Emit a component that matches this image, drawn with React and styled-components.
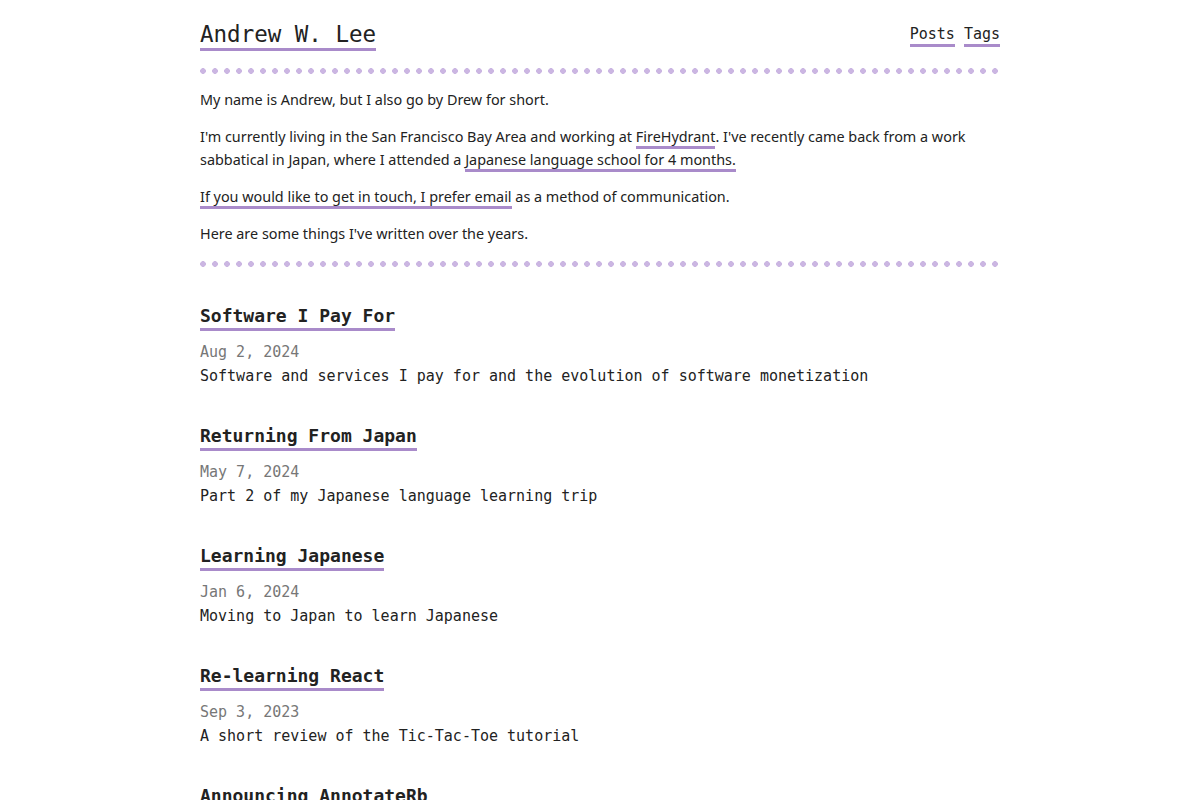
import styled, { createGlobalStyle } from "styled-components";

const GlobalStyle = createGlobalStyle`
    body {
        margin: 0;
        background: #ffffff;
        color: #222222;
        font-family: "Noto Sans", "Open Sans", sans-serif;
    }
`;

const accent = "#a98bca";
const dotColor = "#cbb6e2";
const mono = `"DejaVu Sans Mono", "Liberation Mono", monospace`;

const Page = styled.div`
    width: 800px;
    margin: 0 auto;
    padding-top: 20px;
`;

const Header = styled.header`
    display: flex;
    justify-content: space-between;
    align-items: center;
`;

const SiteTitle = styled.a`
    display: inline-block;
    font-family: ${mono};
    font-size: 22.5px;
    line-height: 28px;
    color: #222;
    text-decoration: none;
    border-bottom: 3px solid ${accent};
`;

const Nav = styled.nav`
    display: flex;
    gap: 9px;
`;

const NavLink = styled.a`
    display: inline-block;
    font-family: ${mono};
    font-size: 15px;
    line-height: 20px;
    color: #222;
    text-decoration: none;
    border-bottom: 3px solid ${accent};
`;

const Dots = styled.div`
    height: 6px;
    margin: ${(props) => props.margin};
    background-image: radial-gradient(circle, ${dotColor} 2.6px, transparent 3.1px);
    background-size: 12px 6px;
    background-position: -3px 0;
    background-repeat: repeat-x;
`;

const Intro = styled.section`
    display: flex;
    flex-direction: column;
    gap: 14px;
    font-size: 14.4px;
    line-height: 23px;
`;

const Para = styled.p`
    margin: 0;
`;

const InlineLink = styled.a`
    color: #222;
    text-decoration: none;
    border-bottom: 3px solid ${accent};
`;

const PostList = styled.section`
    display: flex;
    flex-direction: column;
    padding-top: 1px;
`;

const Post = styled.article`
    margin-top: 36px;
    font-family: ${mono};
`;

const PostTitle = styled.a`
    display: inline-block;
    font-size: 18px;
    font-weight: bold;
    line-height: 24px;
    color: #222;
    text-decoration: none;
    border-bottom: 3px solid ${accent};
`;

const PostDate = styled.div`
    margin-top: 9px;
    font-size: 15px;
    line-height: 24px;
    color: #777;
`;

const PostSummary = styled.div`
    font-size: 15px;
    line-height: 24px;
    color: #222;
`;

const posts = [
    { title: "Software I Pay For", date: "Aug 2, 2024", summary: "Software and services I pay for and the evolution of software monetization" },
    { title: "Returning From Japan", date: "May 7, 2024", summary: "Part 2 of my Japanese language learning trip" },
    { title: "Learning Japanese", date: "Jan 6, 2024", summary: "Moving to Japan to learn Japanese" },
    { title: "Re-learning React", date: "Sep 3, 2023", summary: "A short review of the Tic-Tac-Toe tutorial" },
    { title: "Announcing AnnotateRb", date: "Apr 10, 2023", summary: "A new gem for annotating Rails models" }
];

export default function App() {
    return (
        <>
            <GlobalStyle />
            <Page>
                <Header>
                    <SiteTitle href="#">Andrew W. Lee</SiteTitle>
                    <Nav>
                        <NavLink href="#">Posts</NavLink>
                        <NavLink href="#">Tags</NavLink>
                    </Nav>
                </Header>
                <Dots margin="17px 0 14px" />
                <Intro>
                    <Para>My name is Andrew, but I also go by Drew for short.</Para>
                    <Para>
                        I'm currently living in the San Francisco Bay Area and working at{" "}
                        <InlineLink href="#">FireHydrant</InlineLink>. I've recently came back from a work
                        sabbatical in Japan, where I attended a{" "}
                        <InlineLink href="#">Japanese language school for 4 months.</InlineLink>
                    </Para>
                    <Para>
                        <InlineLink href="#">If you would like to get in touch, I prefer email</InlineLink> as a
                        method of communication.
                    </Para>
                    <Para>Here are some things I've written over the years.</Para>
                </Intro>
                <Dots margin="16px 0 0" />
                <PostList>
                    {posts.map((p) => (
                        <Post key={p.title}>
                            <PostTitle href="#">{p.title}</PostTitle>
                            <PostDate>{p.date}</PostDate>
                            <PostSummary>{p.summary}</PostSummary>
                        </Post>
                    ))}
                </PostList>
            </Page>
        </>
    );
}
